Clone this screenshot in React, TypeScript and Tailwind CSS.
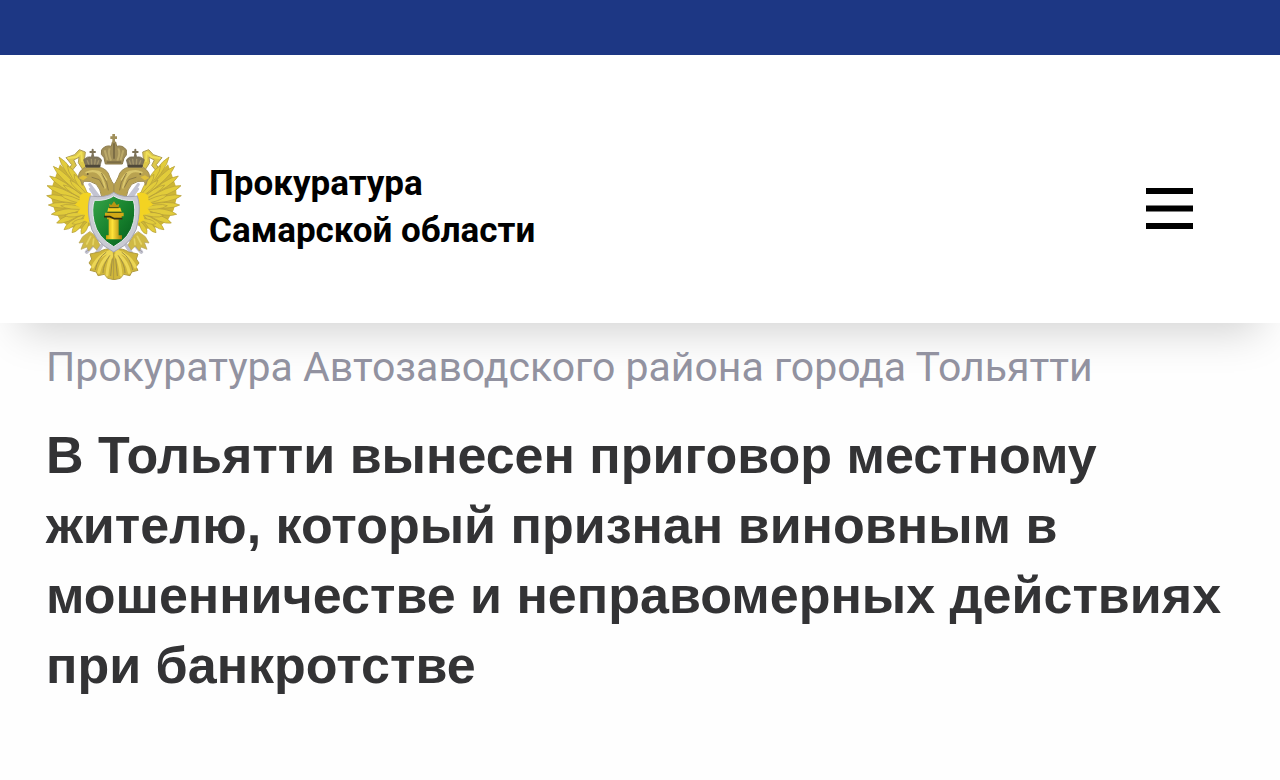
type Feather = {
  from: [number, number];
  tip: [number, number];
  width: number;
};

const feathers: Feather[] = [
  { from: [150, 285], tip: [126, 327], width: 15 },
  { from: [140, 275], tip: [98, 323], width: 16 },
  { from: [140, 265], tip: [74, 314], width: 17 },
  { from: [140, 258], tip: [52, 294], width: 17 },
  { from: [140, 250], tip: [36, 268], width: 17 },
  { from: [140, 242], tip: [27, 240], width: 17 },
  { from: [140, 236], tip: [22, 212], width: 17 },
  { from: [140, 230], tip: [23, 182], width: 17 },
  { from: [140, 224], tip: [31, 153], width: 17 },
  { from: [140, 218], tip: [42, 124], width: 17 },
  { from: [142, 212], tip: [59, 96], width: 18 },
  { from: [145, 212], tip: [84, 122], width: 17 },
  { from: [148, 215], tip: [104, 148], width: 15 },
  { from: [150, 280], tip: [98, 296], width: 13 },
  { from: [150, 265], tip: [76, 272], width: 13 },
  { from: [150, 252], tip: [64, 242], width: 13 },
  { from: [150, 240], tip: [64, 210], width: 13 },
  { from: [150, 230], tip: [72, 180], width: 13 },
  { from: [152, 222], tip: [92, 166], width: 13 },
];

function featherPath({ from, tip, width }: Feather) {
  const dx = tip[0] - from[0];
  const dy = tip[1] - from[1];
  const len = Math.hypot(dx, dy);
  const nx = (-dy / len) * width;
  const ny = (dx / len) * width;
  const mx = from[0] + dx * 0.75;
  const my = from[1] + dy * 0.75;
  return `M${from[0]} ${from[1]} Q${mx + nx} ${my + ny} ${tip[0]} ${tip[1]} Q${mx - nx} ${my - ny} ${from[0]} ${from[1]}Z`;
}

function EagleHalf() {
  return (
    <g strokeLinejoin="round" strokeLinecap="round">
      {/* ribbon */}
      <path
        d="M84 139 L97 119 L80 98 L106 89 L120 74 L138 81 L135 108 L141 124 L129 132 L117 113 L119 97 L103 105 L111 121 L94 142Z"
        fill="#dcc749"
        stroke="#ad9b55"
        strokeWidth="3"
      />
      <path d="M87 99 L111 96 L126 82 L128 108" fill="none" stroke="#efdf58" strokeWidth="6" />

      {/* wing */}
      <path
        d="M150 205 L118 185 L98 155 L62 118 L50 150 L38 185 L36 220 L45 255 L62 284 L90 306 L130 312 L160 298Z"
        fill="#cdb535"
      />
      <g fill="#e2cc3a" stroke="#b09a3a" strokeWidth="2">
        {feathers.map((feather) => (
          <path key={feather.tip.join("-")} d={featherPath(feather)} />
        ))}
      </g>
      <path d="M154 204 Q117 199 121 225 L106 239 L124 249 L114 264 L137 270 L132 284 L161 299Z" fill="#f3d322" />

      {/* sceptre */}
      <path d="M151 178 L179 216 M153 192 L172 219" stroke="#c3c4d2" strokeWidth="9" />
      <path d="M174 346 L142 381 M188 360 L166 393" stroke="#c0c0cc" strokeWidth="11" />
      <path d="M170 350 L141 380" stroke="#92909c" strokeWidth="2" />

      {/* neck and head */}
      <path
        d="M117 157 Q118 132 145 126 L176 126 Q205 130 211 156 Q218 172 224 179 L224 212 L187 215 Q184 193 171 178 Q152 165 133 169 L129 181 L124 166Z"
        fill="#b9a250"
        stroke="#a08d52"
        strokeWidth="3"
      />
      <path d="M141 143 Q169 130 184 153 Q192 164 197 188 M166 139 Q187 138 201 164" fill="none" stroke="#d9c66c" strokeWidth="6" />
      <path d="M158 157 L180 164 L193 187 M187 145 L202 172 L207 195" fill="none" stroke="#8d7b45" strokeWidth="3" />
      <path d="M118 159 L131 151 L145 156 L132 166Z" fill="#dfc03a" />
      <circle cx="145" cy="147" r="3" fill="#6e6035" />

      {/* side crown */}
      <path d="M140 126 L133 104 Q145 92 156 96 L158 89 L162 89 L164 96 Q178 92 187 105 L181 126Z" fill="#81765a" stroke="#70664e" strokeWidth="2" />
      <path d="M144 107 L149 120 M156 103 L157 119 M168 103 L166 119 M178 107 L173 120" stroke="#a3956b" strokeWidth="4" />
      <path d="M141 123 H180" stroke="#4f483a" strokeWidth="7" />
      <path d="M160 74 V92 M153 81 H167" stroke="#7c7156" strokeWidth="6" />

      {/* claw */}
      <path
        d="M151 320 L130 335 L119 354 L133 352 L125 373 L143 366 L148 378 L160 363 L172 375 L182 360 L166 331Z"
        fill="#cfb945"
        stroke="#b3a052"
        strokeWidth="2"
      />
      <path d="M154 334 L142 357 M163 342 L161 358" stroke="#e6d464" strokeWidth="5" />

      {/* tail */}
      <path
        d="M224 370 Q195 370 180 381 L152 387 L157 402 L149 414 L158 425 L152 436 L171 441 L176 452 L195 448 L205 460 L224 464Z"
        fill="#cfb63a"
        stroke="#b19c44"
        strokeWidth="3"
      />
      <path d="M216 378 Q178 388 160 426 M216 384 Q186 405 178 442 M218 390 Q205 416 203 450" fill="none" stroke="#ecd655" strokeWidth="9" />
      <path d="M200 382 Q174 400 168 434 M211 392 Q191 418 191 443 M219 402 L214 452" fill="none" stroke="#a29045" strokeWidth="3" />
    </g>
  );
}

function Emblem() {
  return (
    <svg
      viewBox="20 24 408 441"
      className="h-[147px] w-[136px] shrink-0"
      role="img"
      aria-label="Эмблема прокуратуры"
    >
      <defs>
        <linearGradient id="shield" x1="0" y1="0" x2="1" y2="1">
          <stop offset="0" stopColor="#36a448" />
          <stop offset="0.55" stopColor="#16802c" />
          <stop offset="1" stopColor="#075b1d" />
        </linearGradient>
        <linearGradient id="pillar">
          <stop offset="0" stopColor="#c59e08" />
          <stop offset="0.4" stopColor="#ffe33a" />
          <stop offset="1" stopColor="#a47d09" />
        </linearGradient>
      </defs>

      <EagleHalf />
      <g transform="translate(448 0) scale(-1 1)">
        <EagleHalf />
      </g>

      {/* centre crown */}
      <path
        d="M198 117 L194 98 L186 88 L187 74 Q199 59 216 64 L219 51 H229 L232 64 Q250 59 261 75 L261 90 L254 99 L249 117Z"
        fill="#a08e58"
        stroke="#8a794a"
        strokeWidth="3"
      />
      <path d="M196 76 L204 105 M211 70 Q205 83 215 107 M237 70 Q244 84 234 107 M252 76 L244 105" fill="none" stroke="#bcaa6a" strokeWidth="6" />
      <path d="M224 55 V101 M202 112 H246" stroke="#7c6d45" strokeWidth="6" />
      <path d="M223 27 V54 M213 38 H233" stroke="#a08f5a" strokeWidth="8" />

      {/* shield */}
      <path
        d="M223 202 Q201 220 153 213 Q143 243 150 284 Q158 348 223 381 Q291 348 297 284 Q304 242 294 213 Q247 220 223 202Z"
        fill="#c9cad3"
        stroke="#a5a5b0"
        strokeWidth="3"
      />
      <path
        d="M223 213 Q201 228 165 226 Q156 252 164 289 Q174 338 223 365 Q273 338 283 289 Q290 252 282 226 Q247 228 223 213Z"
        fill="url(#shield)"
        stroke="#e8eaee"
        strokeWidth="3"
      />

      {/* pillar of law */}
      <path d="M208 276 H238 V331 H248 V343 H200 V331 H208Z" fill="url(#pillar)" />
      <path d="M197 263 H253 V274 H247 V283 H203 V274 H197Z" fill="#d3a916" />
      <path d="M207 248 H243 L247 260 H204Z" fill="#f0cf24" />
      <path d="M209 236 L216 240 L224 229 L232 240 L240 236 L238 246 H211Z" fill="#b99511" />
      <path d="M194 275 H212 L225 281 H249" fill="none" stroke="#312e12" strokeWidth="5" />
      <path d="M209 248 H238 M204 262 H246" stroke="#4d4a13" strokeWidth="3" />
    </svg>
  );
}

function MenuIcon() {
  return (
    <svg viewBox="0 0 47 41" className="h-[41px] w-[47px]" aria-hidden="true">
      <path d="M0 0H47V6H0Z M0 17.5H47V23.5H0Z M0 35H47V41H0Z" />
    </svg>
  );
}

function App() {
  return (
    <div className="min-h-screen overflow-hidden bg-[#fefefe] font-[Roboto,sans-serif]">
      {/* TOP BAR */}
      <div className="h-[55px] bg-[#1d3784]" />

      {/* HEADER */}
      <header className="relative flex items-center justify-between bg-white pt-[78px] pr-[87px] pb-[43px] pl-[46px] shadow-[0_28px_40px_-20px_rgba(0,0,0,0.18)]">
        <a href="#" className="flex items-center gap-[27px] text-black">
          <Emblem />
          <span className="text-[35px] leading-[47px] font-bold">
            Прокуратура
            <br />
            Самарской области
          </span>
        </a>
        <button type="button" aria-label="Меню" className="pt-1 text-black">
          <MenuIcon />
        </button>
      </header>

      {/* ARTICLE */}
      <main className="relative px-[46px] pt-5">
        <p className="text-[41px] leading-[48px] text-[#9292a0]">
          Прокуратура Автозаводского района города Тольятти
        </p>
        <h1 className="mt-[29px] font-['Liberation_Sans',sans-serif] text-[52px] leading-[70px] font-bold text-[#333335]">
          В Тольятти вынесен приговор местному жителю, который признан виновным в
          мошенничестве и неправомерных действиях при банкротстве
        </h1>
      </main>
    </div>
  );
}

export default App;
